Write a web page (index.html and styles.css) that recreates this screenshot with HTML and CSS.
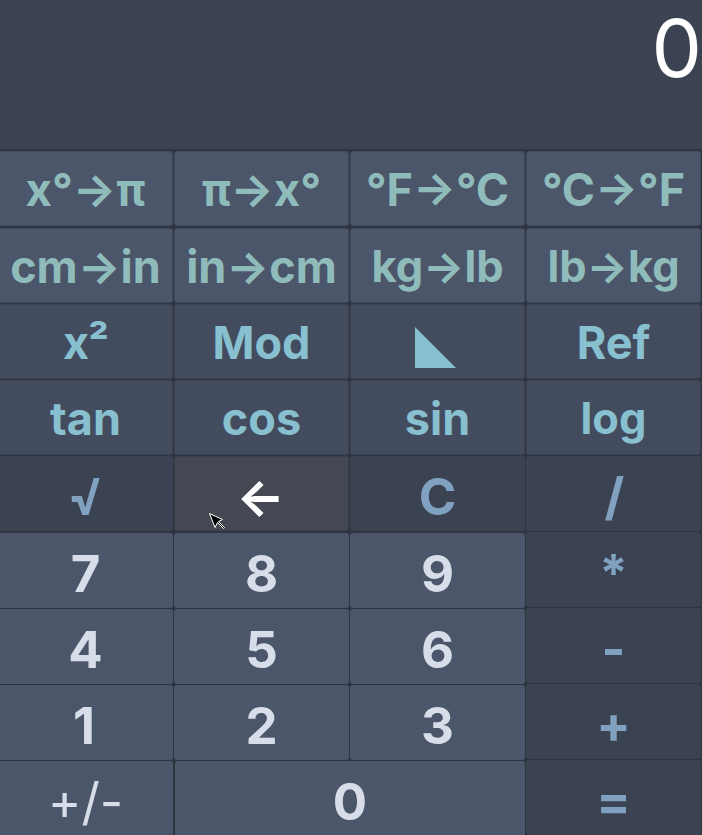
FILE: index.html
```
<!DOCTYPE html>
<html lang="en">
<head>
<meta charset="utf-8">
<title>Calculator</title>
<link rel="stylesheet" href="styles.css">
</head>
<body>
<main class="calculator">
  <div class="display">0</div>
  <div class="grid convert">
    <button class="key angle">x°→π</button><button class="key angle">π→x°</button><button class="key">°F→°C</button><button class="key">°C→°F</button>
    <button class="key">cm→in</button><button class="key">in→cm</button><button class="key small">kg→lb</button><button class="key small">lb→kg</button>
  </div>
  <div class="grid functions">
    <button class="key square">x²</button><button class="key">Mod</button><button class="key" aria-label="Triangle"><span class="triangle"></span></button><button class="key">Ref</button>
    <button class="key">tan</button><button class="key">cos</button><button class="key">sin</button><button class="key small">log</button>
  </div>
  <div class="grid operators">
    <button class="key">√</button><button class="key active">←</button><button class="key">C</button><button class="key divide">/</button>
  </div>
  <div class="keypad">
    <div class="grid numbers">
      <button class="key">7</button><button class="key">8</button><button class="key">9</button>
      <button class="key">4</button><button class="key">5</button><button class="key">6</button>
      <button class="key one">1</button><button class="key">2</button><button class="key">3</button>
      <button class="key sign">+/-</button><button class="key zero">0</button>
    </div>
    <div class="grid operators side">
      <button class="key">*</button><button class="key">-</button><button class="key">+</button><button class="key">=</button>
    </div>
  </div>
  <svg class="cursor" width="17" height="17" viewBox="0 0 17 17"><path d="M.5.5 13.5 6.5 9.5 8.5 15.5 14.5 14.5 15.5 8.5 9.5 6 14.5Z" fill="#000" stroke="#fff"/></svg>
</main>
</body>
</html>
```
FILE: styles.css
```
* { box-sizing: border-box; }
body {
  margin: 0;
  height: 835px;
  overflow: hidden;
  background: #2e3440;
  font-family: Inter, sans-serif;
  font-optical-sizing: none;
}
.calculator {
  position: relative;
  width: 702px;
  height: 835px;
  overflow: hidden;
}
.display {
  height: 149px;
  margin-bottom: 2px;
  background: #3b4252;
  color: #fff;
  font-size: 80px;
  line-height: 95px;
  text-align: right;
}
.grid {
  display: grid;
  grid-template-columns: repeat(4, 175px);
  grid-auto-rows: 75px;
  gap: 1px;
  margin-left: -2px;
}
.key {
  display: flex;
  align-items: center;
  justify-content: center;
  margin: 0;
  padding: 2px 0 0;
  border: 0;
  border-radius: 3px;
  font: 700 45px/1 Inter, sans-serif;
  font-optical-sizing: none;
  white-space: nowrap;
}
.convert { row-gap: 2px; }
.convert .key {
  background: #4c566a;
  border: 1px solid #434c5e;
  color: #8fbcbb;
}
.convert .angle { font-size: 45.6px; }
.functions { margin-top: 1px; }
.functions .key {
  background: #434c5e;
  border: 1px solid #3b4252;
  color: #88c0d0;
}
.functions .square { letter-spacing: -1px; }
.grid .small {
  padding-top: 2px;
  font-size: 43.4px;
}
.triangle {
  width: 41px;
  height: 41px;
  margin: 10px 4px 0 0;
  background: #88c0d0;
  clip-path: polygon(0 0, 100% 100%, 0 100%);
}
.operators { margin-top: 1px; }
.operators .key {
  padding-top: 5px;
  background: #3b4252;
  color: #81a1c1;
  font-size: 51px;
}
.operators .active {
  padding-right: 2px;
  background: #434853;
  border: 1px solid #3b4048;
  color: #fff;
}
.operators .divide { padding-left: 2px; }
.keypad { display: flex; gap: 1px; }
.numbers {
  grid-template-columns: repeat(3, 175px);
  margin-top: 2px;
}
.numbers .key {
  padding-top: 6px;
  background: #4c566a;
  color: #d8dee9;
  font-size: 51px;
}
.numbers .one { padding-right: 3px; }
.numbers .sign { font-weight: 400; }
.numbers .zero {
  grid-column: span 2;
  margin-left: 1px;
}
.side {
  grid-template-columns: 175px;
  margin-left: 0;
}
.cursor {
  position: absolute;
  left: 209px;
  top: 513px;
}
```
